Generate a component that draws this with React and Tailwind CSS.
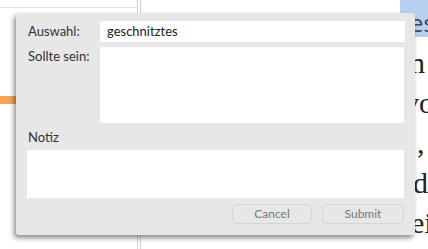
import React from "react";

export default function App() {
  const sans = { fontFamily: '"Source Sans Pro", Lato, "Noto Sans", sans-serif' };
  return (
    <div className="relative w-[428px] h-[249px] overflow-hidden bg-white flex" style={sans}>
      {/* background document */}
      <div className="w-[137px] flex flex-col">
        <div className="h-[8px] border-b border-[#e2e2e2]" />
        <div className="h-[88px]" />
        <div className="h-[8px] w-[20px] bg-[#f5a557]" />
      </div>
      <div className="w-[4px] h-full border-l border-r border-[#d0d0d0]" />
      <div className="flex-1" />
      <div className="w-[28px] flex flex-col text-[30px] leading-[40px] text-[#222] whitespace-nowrap" style={{ fontFamily: '"Liberation Serif", serif' }}>
        <div className="h-[37px] bg-[#b6d0f0] text-[#3a4a5c] text-[24px] leading-[24px] pt-[11px] pl-[10px] overflow-hidden" style={{ fontFamily: '"Open Sans", sans-serif' }}>es</div>
        <div className="pl-[10px] mt-[6px] h-[40px]">n</div>
        <div className="pl-[4px] h-[40px]">vo</div>
        <div className="pl-[17px] h-[40px]">,</div>
        <div className="pl-[13px] h-[40px]">d</div>
        <div className="pl-[11px] h-[40px]">ei</div>
      </div>

      {/* dialog */}
      <div className="absolute left-[16px] top-[13px] w-[399px] h-[222px] rounded-[3px] bg-[#e7e7e7] shadow-[-2px_3px_5px_rgba(0,0,0,0.45)] flex flex-col pl-[11px] pr-[10px] pt-[8px]">
        <div className="flex items-center h-[21px]">
          <div className="w-[73px] pl-[1px] text-[13px] text-[#333]">Auswahl:</div>
          <div className="flex-1 h-full bg-white flex items-center pl-[7px] text-[13px] text-[#222]">geschnitztes</div>
        </div>
        <div className="flex mt-[5px] h-[76px]">
          <div className="w-[73px] pl-[1px] text-[13px] text-[#333] pt-[1px] leading-[16px]">Sollte sein:</div>
          <div className="flex-1 h-full bg-white mr-[1px]" />
        </div>
        <div className="h-[27px] pl-[1px] pt-[6px] text-[13px] leading-[16px] text-[#333]">Notiz</div>
        <div className="h-[48px] bg-white mr-[1px]" />
        <div className="flex justify-end gap-[10px] mt-[6px] mr-[1px]">
          <div className="w-[80px] h-[20px] rounded-[4px] border border-[#d6d6d6] flex items-center justify-center text-[12px] text-[#777]">Cancel</div>
          <div className="w-[82px] h-[20px] rounded-[4px] border border-[#d6d6d6] flex items-center justify-center text-[12px] text-[#777]">Submit</div>
        </div>
      </div>
    </div>
  );
}
